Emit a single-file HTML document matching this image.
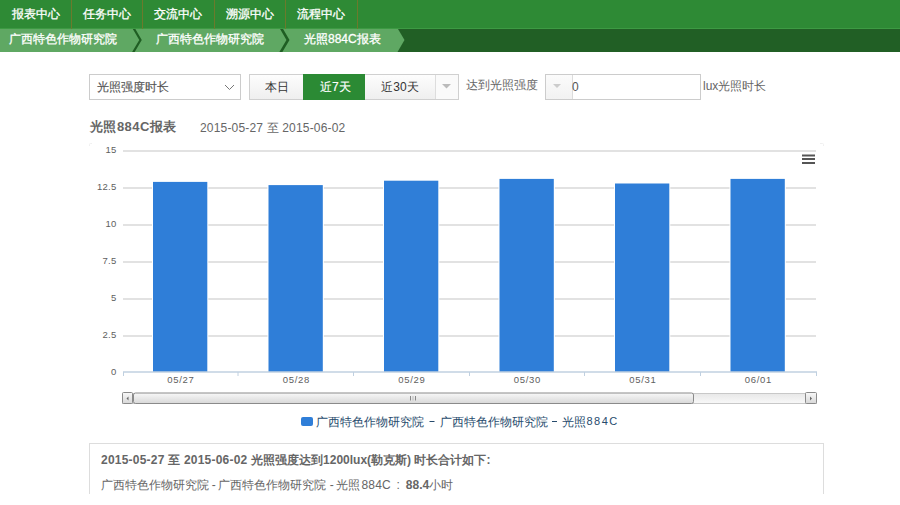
<!DOCTYPE html>
<html><head><meta charset="utf-8">
<style>
*{box-sizing:border-box;margin:0;padding:0}
html,body{width:900px;height:505px;overflow:hidden;background:#fff;font-family:"Liberation Sans",sans-serif;color:#666}
.abs{position:absolute}
#nav{position:absolute;left:0;top:0;width:900px;height:29px;background:#2e8a35;border-bottom:1px solid #3d9a43}
#nav span{position:absolute;top:0;height:29px;line-height:28px;color:#fff;font-size:12px;-webkit-text-stroke:0.3px #fff}
#nav i{position:absolute;top:0;width:1px;height:29px;background:#6b7a2c}
#bc{position:absolute;left:0;top:29px;width:900px;height:23px;background:#215f25}
#bc span{position:absolute;top:-1px;line-height:23px;color:#fff;font-size:12px;-webkit-text-stroke:0.3px #fff}
.t{position:absolute;white-space:nowrap}
.w{-webkit-text-stroke-width:0.15px}
</style></head><body>
<div id="nav">
<span style="left:12px">报表中心</span><i style="left:71px"></i>
<span style="left:83px">任务中心</span><i style="left:142px"></i>
<span style="left:154px">交流中心</span><i style="left:214px"></i>
<span style="left:226px">溯源中心</span><i style="left:285px"></i>
<span style="left:297px">流程中心</span><i style="left:357px"></i>
</div>
<div id="bc">
<svg class="abs" style="left:0;top:0" width="410" height="23">
<polygon points="0,0 398,0 404.5,11 397.5,23 0,23" fill="#5fa863"/>
<polyline points="133.5,-1 140.5,11 132.8,24" fill="none" stroke="#1f5e23" stroke-width="2.2"/>
<polyline points="281,-1 288,11 280.3,24" fill="none" stroke="#1f5e23" stroke-width="2.6"/>
</svg>
<span style="left:9px">广西特色作物研究院</span>
<span style="left:156px">广西特色作物研究院</span>
<span style="left:304px">光照884C报表</span>
</div>

<!-- controls -->
<div class="abs" style="left:89px;top:74px;width:152px;height:26px;border:1px solid #ccc;background:#fff"></div>
<div class="t w" style="left:97px;top:79px;font-size:12px;line-height:16px;color:#555">光照强度时长</div>
<svg class="abs" style="left:224px;top:84px" width="12" height="8"><polyline points="1,1 5.5,5.5 10,1" fill="none" stroke="#777" stroke-width="1"/></svg>

<div class="abs" style="left:249px;top:74px;width:210px;height:26px;border:1px solid #d0d0d0;background:linear-gradient(#fdfdfd,#efefef)"></div>
<div class="abs" style="left:436px;top:75px;width:22px;height:24px;background:#fafafa"></div>
<div class="abs" style="left:303px;top:74px;width:62px;height:26px;background:#2b8a34"></div>
<div class="abs" style="left:435px;top:75px;width:1px;height:24px;background:#ddd"></div>
<div class="t" style="left:265px;top:79px;font-size:12px;line-height:16px;color:#333">本日</div>
<div class="t w" style="left:320px;top:79px;font-size:12px;line-height:16px;color:#fff">近7天</div>
<div class="t" style="left:381px;top:79px;font-size:12px;line-height:16px;color:#333;letter-spacing:0.2px">近30天</div>
<svg class="abs" style="left:442px;top:84px" width="10" height="6"><polygon points="0,0 9,0 4.5,4.5" fill="#bbb"/></svg>

<div class="t" style="left:466px;top:77px;font-size:12px;line-height:16px;color:#666">达到光照强度</div>
<div class="abs" style="left:545px;top:74px;width:156px;height:26px;border:1px solid #ccc;background:#fff"></div>
<div class="abs" style="left:546px;top:75px;width:27px;height:24px;background:linear-gradient(#fbfbfb,#f2f2f2);border-right:1px solid #dcdcdc"></div>
<svg class="abs" style="left:553px;top:84px" width="10" height="6"><polygon points="0,0 8,0 4,4" fill="#ccc"/></svg>
<div class="t" style="left:572px;top:79px;font-size:12px;line-height:16px;color:#555">0</div>
<div class="t" style="left:703px;top:78px;font-size:12px;line-height:16px;color:#666">lux光照时长</div>

<!-- title -->
<div class="t" style="left:90px;top:119px;font-size:13px;line-height:16px;font-weight:bold;color:#666;letter-spacing:0.45px">光照884C报表</div>
<div class="t" style="left:200px;top:120px;font-size:12px;line-height:16px;color:#666;letter-spacing:0.17px">2015-05-27 至 2015-06-02</div>

<!-- chart -->
<svg class="abs" style="left:0;top:0" width="900" height="505">
<g stroke="#d8d8d8" stroke-width="1.3">
<line x1="123" y1="151" x2="816" y2="151"/>
<line x1="123" y1="188" x2="816" y2="188"/>
<line x1="123" y1="225" x2="816" y2="225"/>
<line x1="123" y1="262" x2="816" y2="262"/>
<line x1="123" y1="299" x2="816" y2="299"/>
<line x1="123" y1="336" x2="816" y2="336"/>
</g>
<g fill="#fff">
<rect x="152.0" y="180.9" width="56.3" height="191.1"/>
<rect x="267.5" y="184.1" width="56.3" height="187.9"/>
<rect x="383.0" y="179.7" width="56.3" height="192.3"/>
<rect x="498.5" y="177.9" width="56.3" height="194.1"/>
<rect x="614.0" y="182.5" width="56.3" height="189.5"/>
<rect x="729.5" y="177.9" width="56.3" height="194.1"/>
</g>
<g fill="#2f7ed8">
<rect x="153.0" y="181.9" width="54.3" height="190.1"/>
<rect x="268.5" y="185.1" width="54.3" height="186.9"/>
<rect x="384.0" y="180.7" width="54.3" height="191.3"/>
<rect x="499.5" y="178.9" width="54.3" height="193.1"/>
<rect x="615.0" y="183.5" width="54.3" height="188.5"/>
<rect x="730.5" y="178.9" width="54.3" height="193.1"/>
</g>
<path d="M89.5,146 V144.5 Q89.5,143.5 90.5,143.5 H92" fill="none" stroke="#f0f0f0"/>
<path d="M820,143.5 H822.5 Q823.5,143.5 823.5,144.5 V146" fill="none" stroke="#f0f0f0"/>
<g stroke="#c0d0e0" stroke-width="1">
<line x1="123" y1="372" x2="817" y2="372" stroke-width="1.4"/>
<line x1="123.5" y1="372" x2="123.5" y2="376"/>
<line x1="238" y1="372" x2="238" y2="376"/>
<line x1="353.5" y1="372" x2="353.5" y2="376"/>
<line x1="469.5" y1="372" x2="469.5" y2="376"/>
<line x1="584.5" y1="372" x2="584.5" y2="376"/>
<line x1="700.5" y1="372" x2="700.5" y2="376"/>
<line x1="816.5" y1="372" x2="816.5" y2="376"/>
</g>
<g font-family="Liberation Sans" font-size="9.5" fill="#606060" text-anchor="end" letter-spacing="0.3" transform="translate(-0.4,-1.3)">
<text x="117" y="154">15</text>
<text x="117" y="191">12.5</text>
<text x="117" y="228">10</text>
<text x="117" y="265">7.5</text>
<text x="117" y="302">5</text>
<text x="117" y="339">2.5</text>
<text x="117" y="376">0</text>
</g>
<g font-family="Liberation Sans" font-size="9.5" fill="#606060" text-anchor="middle" letter-spacing="0.75" transform="translate(0.4,-1.5)">
<text x="180.5" y="384">05/27</text>
<text x="296" y="384">05/28</text>
<text x="411.5" y="384">05/29</text>
<text x="527" y="384">05/30</text>
<text x="642.5" y="384">05/31</text>
<text x="758" y="384">06/01</text>
</g>
<!-- menu -->
<g stroke="#555" stroke-width="2">
<line x1="802" y1="155.5" x2="815" y2="155.5"/>
<line x1="802" y1="159" x2="815" y2="159"/>
<line x1="802" y1="163" x2="815" y2="163"/>
</g>
<!-- scrollbar -->
<defs>
<linearGradient id="sg" x1="0" y1="0" x2="0" y2="1"><stop offset="0" stop-color="#e8e8e8"/><stop offset="1" stop-color="#f8f8f8"/></linearGradient>
<linearGradient id="tg" x1="0" y1="0" x2="0" y2="1"><stop offset="0" stop-color="#f8f8f8"/><stop offset="1" stop-color="#d8d8d8"/></linearGradient>
</defs>
<rect x="122.5" y="393.5" width="694" height="10" fill="url(#sg)" stroke="#c8c8c8" stroke-width="1"/>
<rect x="133.5" y="393" width="560" height="10.5" rx="2" fill="url(#tg)" stroke="#8a8a8a" stroke-width="1"/>
<g stroke="#888" stroke-width="1"><line x1="410.5" y1="396" x2="410.5" y2="400.5"/><line x1="413" y1="396" x2="413" y2="400.5" stroke="#bbb"/><line x1="415.5" y1="396" x2="415.5" y2="400.5"/></g>
<rect x="122.5" y="392.5" width="10" height="11" rx="1" fill="url(#tg)" stroke="#8a8a8a"/>
<polygon points="128.5,396.5 126.5,398.5 128.5,400.5" fill="#666"/>
<rect x="805.5" y="392.5" width="11" height="11" rx="1" fill="url(#tg)" stroke="#8a8a8a"/>
<polygon points="810,396.5 812,398.5 810,400.5" fill="#666"/>
<!-- legend -->
<rect x="301" y="417" width="12" height="9" rx="2" fill="#2f7ed8"/>
<g font-family="Liberation Sans" font-size="12" fill="#274b6d">
<text x="316.3" y="426">广西特色作物研究院</text>
<text x="439.6" y="426">广西特色作物研究院</text>
<text x="561.8" y="426">光照</text>
<text x="586.6" y="425" font-size="11" letter-spacing="1.4">884C</text>
</g>
<g stroke="#274b6d" stroke-width="1"><line x1="429.5" y1="421.5" x2="434.5" y2="421.5"/><line x1="552" y1="421.5" x2="557" y2="421.5"/></g>
</svg>

<!-- summary -->
<div class="abs" style="left:89px;top:443px;width:735px;height:80px;border:1px solid #ddd;border-bottom:none"></div>
<div class="t" style="left:101px;top:451.5px;font-size:12px;line-height:16px;font-weight:bold;color:#666"><span style="letter-spacing:0.22px">2015-05-27 至 2015-06-02 </span>光照强度达到1200lux(勒克斯) 时长合计如下:</div>
<div style="position:absolute;left:0;top:477px;font-size:12px;line-height:16px;color:#666;white-space:nowrap">
<span class="t" style="left:101px">广西特色作物研究院</span>
<span class="t" style="left:211.8px">-</span>
<span class="t" style="left:218.3px">广西特色作物研究院</span>
<span class="t" style="left:329.8px">-</span>
<span class="t" style="left:336.3px">光照</span>
<span class="t" style="left:361.4px;letter-spacing:0.2px">884C</span>
<span class="t" style="left:396.4px">:</span>
<span class="t" style="left:405.8px;font-weight:bold">88.4</span>
<span class="t" style="left:428.9px">小时</span>
</div>
<div class="abs" style="left:0;top:494px;width:900px;height:11px;background:#fff"></div>
</body></html>
